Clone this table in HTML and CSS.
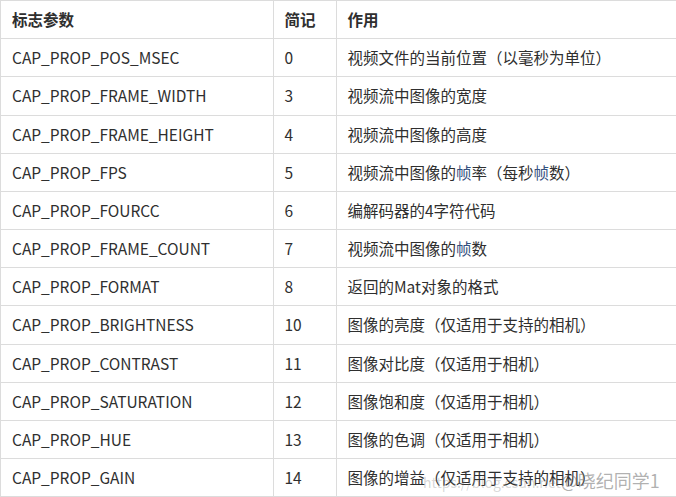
FILE: index.html
```html
<!DOCTYPE html>
<html lang="zh-CN">
<head>
<meta charset="utf-8">
<title>VideoCapture 属性</title>
<link rel="stylesheet" href="styles.css">
</head>
<body>
<div class="wrap">
<table class="props">
  <colgroup>
    <col class="c1"><col class="c2"><col class="c3">
  </colgroup>
  <thead>
    <tr><th>标志参数</th><th>简记</th><th>作用</th></tr>
  </thead>
  <tbody>
    <tr><td>CAP_PROP_POS_MSEC</td><td>0</td><td>视频文件的当前位置（以毫秒为单位）</td></tr>
    <tr><td>CAP_PROP_FRAME_WIDTH</td><td>3</td><td>视频流中图像的宽度</td></tr>
    <tr><td>CAP_PROP_FRAME_HEIGHT</td><td>4</td><td>视频流中图像的高度</td></tr>
    <tr><td>CAP_PROP_FPS</td><td>5</td><td>视频流中图像的<span class="hl">帧</span>率（每秒<span class="hl">帧</span>数）</td></tr>
    <tr><td>CAP_PROP_FOURCC</td><td>6</td><td>编解码器的4字符代码</td></tr>
    <tr><td>CAP_PROP_FRAME_COUNT</td><td>7</td><td>视频流中图像的<span class="hl">帧</span>数</td></tr>
    <tr><td>CAP_PROP_FORMAT</td><td>8</td><td>返回的Mat对象的格式</td></tr>
    <tr><td>CAP_PROP_BRIGHTNESS</td><td>10</td><td>图像的亮度（仅适用于支持的相机）</td></tr>
    <tr><td>CAP_PROP_CONTRAST</td><td>11</td><td>图像对比度（仅适用于相机）</td></tr>
    <tr><td>CAP_PROP_SATURATION</td><td>12</td><td>图像饱和度（仅适用于相机）</td></tr>
    <tr><td>CAP_PROP_HUE</td><td>13</td><td>图像的色调（仅适用于相机）</td></tr>
    <tr><td>CAP_PROP_GAIN</td><td>14</td><td>图像的增益（仅适用于支持的相机）</td></tr>
  </tbody>
</table>
<div class="watermark">https://blog.csdn.net<span class="wm-name">@晓纪同学1</span></div>
</div>
</body>
</html>
```
FILE: styles.css
```css
html, body {
  margin: 0;
  padding: 0;
  background: #fff;
}
body {
  overflow: hidden;
  font-family: "Noto Sans CJK SC", "Noto Sans", sans-serif;
  color: #2f2f2f;
}
.wrap {
  position: relative;
  width: 700px;
}
.props {
  border-collapse: collapse;
  table-layout: fixed;
  width: 700px;
  font-size: 15.5px;
}
.c1 { width: 272.5px; }
.c2 { width: 63px; }
.c3 { width: auto; }
.props th,
.props td {
  border: 1px solid #dcdcdc;
  padding: 8px 11px;
  line-height: 21.17px;
  text-align: left;
  white-space: nowrap;
  vertical-align: middle;
}
.props th {
  font-weight: 700;
}
.hl {
  color: #34507e;
}
.watermark {
  position: absolute;
  left: 423px;
  top: 467px;
  font-family: "Noto Sans CJK SC", sans-serif;
  font-size: 14px;
  color: rgba(120, 120, 120, 0.3);
  white-space: nowrap;
  pointer-events: none;
}
.wm-name {
  font-size: 18px;
  color: rgba(110, 110, 110, 0.55);
}
```
